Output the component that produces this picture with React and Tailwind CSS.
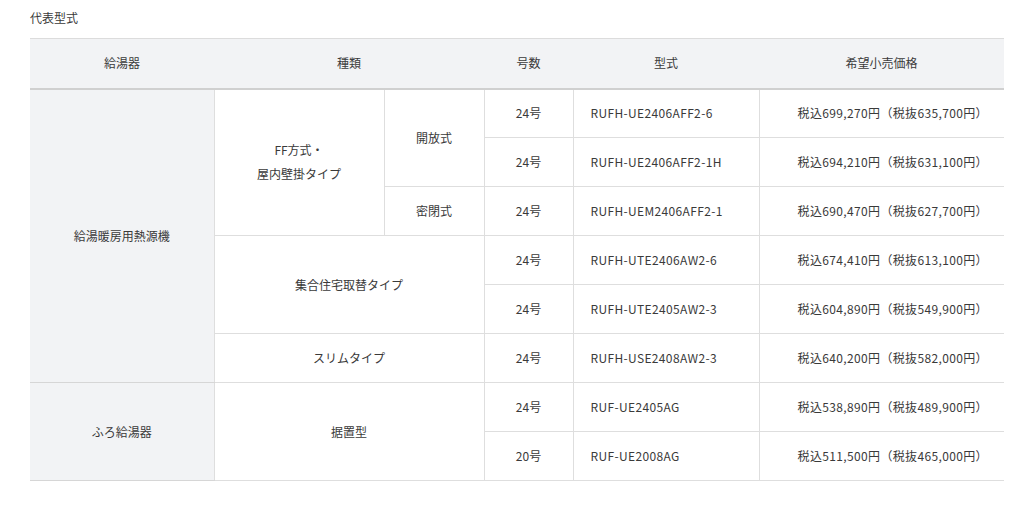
import React from 'react';

const rows = [
  { size: '24号', model: 'RUFH-UE2406AFF2-6', price: '税込699,270円（税抜635,700円）' },
  { size: '24号', model: 'RUFH-UE2406AFF2-1H', price: '税込694,210円（税抜631,100円）' },
  { size: '24号', model: 'RUFH-UEM2406AFF2-1', price: '税込690,470円（税抜627,700円）' },
  { size: '24号', model: 'RUFH-UTE2406AW2-6', price: '税込674,410円（税抜613,100円）' },
  { size: '24号', model: 'RUFH-UTE2405AW2-3', price: '税込604,890円（税抜549,900円）' },
  { size: '24号', model: 'RUFH-USE2408AW2-3', price: '税込640,200円（税抜582,000円）' },
  { size: '24号', model: 'RUF-UE2405AG', price: '税込538,890円（税抜489,900円）' },
  { size: '20号', model: 'RUF-UE2008AG', price: '税込511,500円（税抜465,000円）' },
];

const td = 'h-[49px] border-b border-l border-[#dedede] text-center align-middle p-0';
const gray = 'h-[49px] border-b border-[#d6d6d6] bg-[#f2f3f5] text-center align-middle p-0';

function Tail({ r }) {
  return (
    <>
      <td className={td}>{r.size}</td>
      <td className={td + ' !text-left pl-[17px] tracking-[0.35px]'}>{r.model}</td>
      <td className={td + ' pl-[22px] tracking-[0.35px]'}>{r.price}</td>
    </>
  );
}

export default function App() {
  return (
    <div
      className="bg-white w-[1024px] h-[505px] text-[12px] text-[#3a3a3a] leading-[16px]"
      style={{ fontFamily: '"Noto Sans CJK JP", "Noto Sans", sans-serif' }}
    >
      <div className="pt-[10px] pl-[30px]">代表型式</div>
      <table className="mt-[12px] ml-[30px] w-[974px] table-fixed border-collapse">
        <colgroup>
          <col className="w-[184px]" />
          <col className="w-[170px]" />
          <col className="w-[100px]" />
          <col className="w-[89px]" />
          <col className="w-[186px]" />
          <col className="w-[245px]" />
        </colgroup>
        <thead>
          <tr className="bg-[#f2f3f5] border-t border-[#dcdcdc] border-b-2 border-b-[#d0d0d0]">
            <th className="h-[50px] font-normal">給湯器</th>
            <th className="font-normal" colSpan={2}>種類</th>
            <th className="font-normal">号数</th>
            <th className="font-normal">型式</th>
            <th className="font-normal">希望小売価格</th>
          </tr>
        </thead>
        <tbody>
          <tr>
            <td className={gray} rowSpan={6}>給湯暖房用熱源機</td>
            <td className={td + ' leading-[24px]'} rowSpan={3}>FF方式・<br />屋内壁掛タイプ</td>
            <td className={td} rowSpan={2}>開放式</td>
            <Tail r={rows[0]} />
          </tr>
          <tr>
            <Tail r={rows[1]} />
          </tr>
          <tr>
            <td className={td}>密閉式</td>
            <Tail r={rows[2]} />
          </tr>
          <tr>
            <td className={td} colSpan={2} rowSpan={2}>集合住宅取替タイプ</td>
            <Tail r={rows[3]} />
          </tr>
          <tr>
            <Tail r={rows[4]} />
          </tr>
          <tr>
            <td className={td} colSpan={2}>スリムタイプ</td>
            <Tail r={rows[5]} />
          </tr>
          <tr>
            <td className={gray} rowSpan={2}>ふろ給湯器</td>
            <td className={td} colSpan={2} rowSpan={2}>据置型</td>
            <Tail r={rows[6]} />
          </tr>
          <tr>
            <Tail r={rows[7]} />
          </tr>
        </tbody>
      </table>
    </div>
  );
}
